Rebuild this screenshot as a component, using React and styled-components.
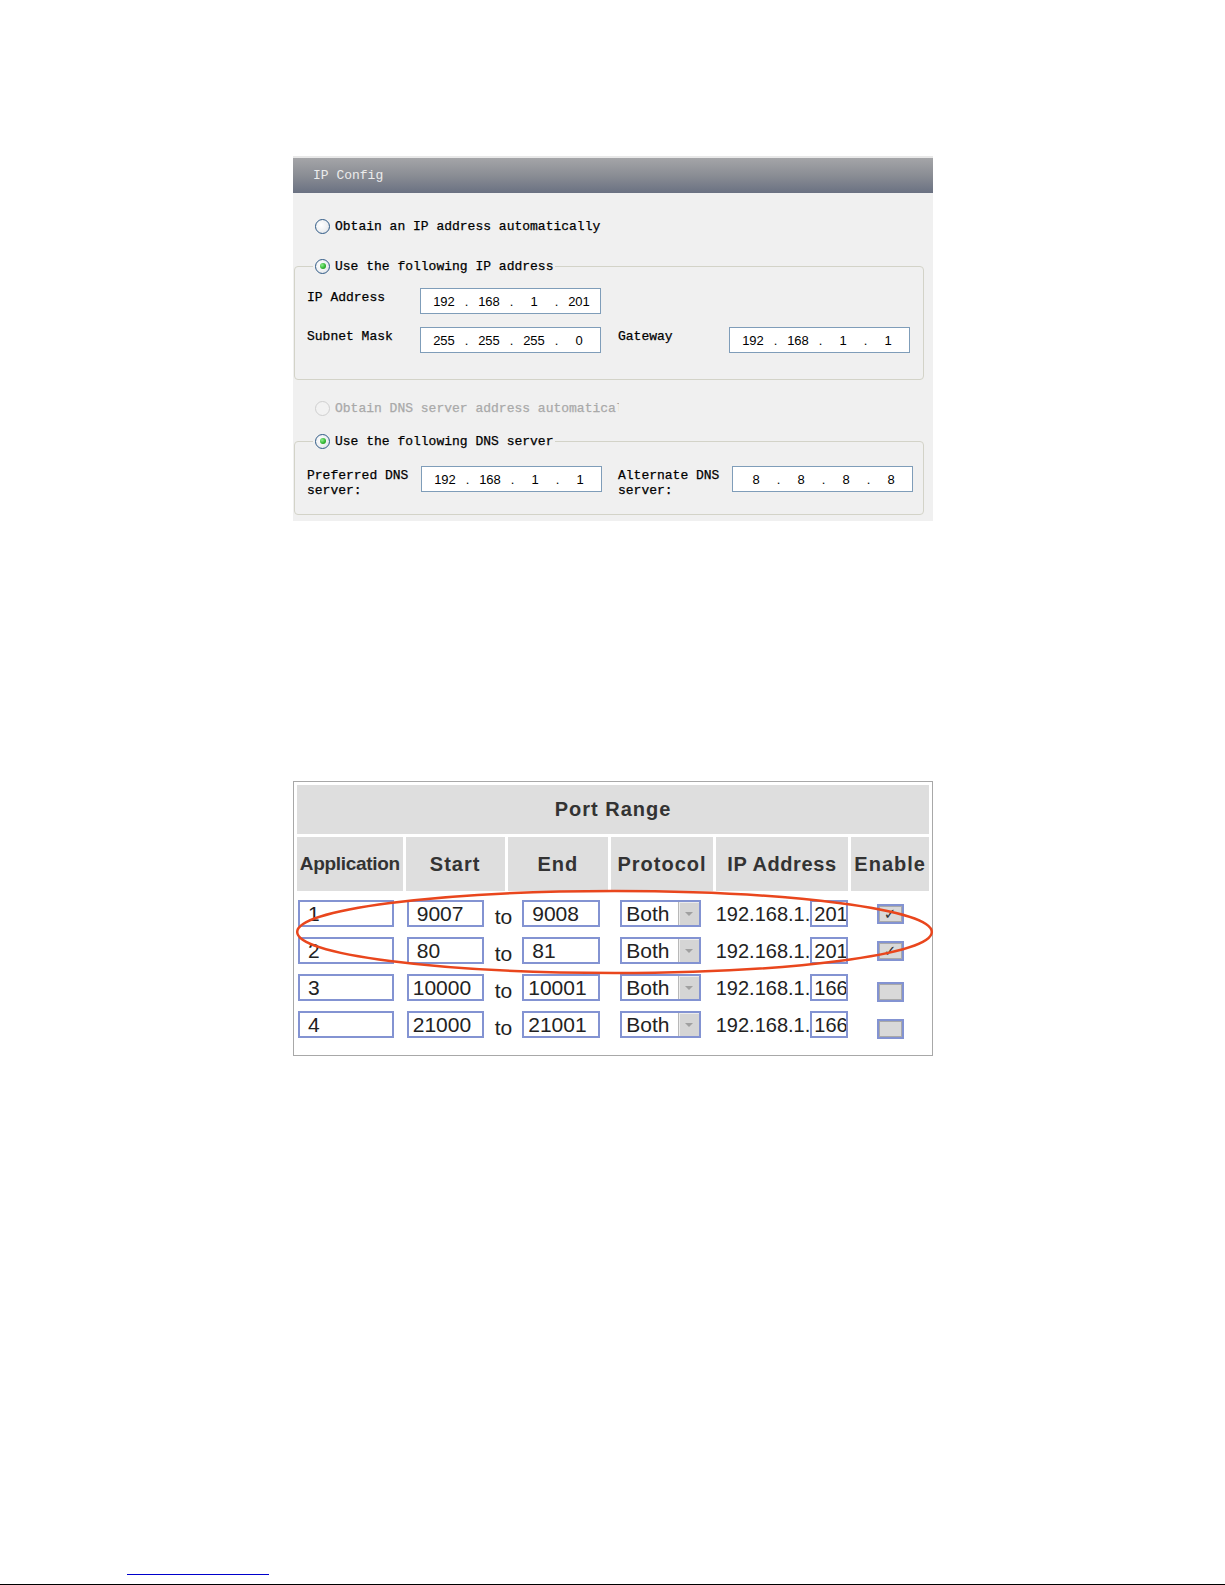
import React from 'react';
import styled, { createGlobalStyle } from 'styled-components';

const Global = createGlobalStyle`
  html, body { margin: 0; padding: 0; background: #ffffff; }
`;

const Page = styled.div`
  min-height: 1585px;
  display: flex;
  flex-direction: column;
  box-sizing: border-box;
  padding-top: 156px;
`;

/* ---------- IP Config panel ---------- */
const Panel = styled.section`
  margin-left: 293px;
  width: 640px;
  box-sizing: border-box;
  background: #f0f0f0;
  border-top: 2px solid #e8e8e8;
  padding-bottom: 6px;
  font-family: "Liberation Mono", "DejaVu Sans Mono", monospace;
  font-size: 13px;
  color: #000;
  -webkit-text-stroke: 0.25px currentColor;
`;

const PanelHeader = styled.div`
  height: 35px;
  display: flex;
  align-items: center;
  padding-left: 20px;
  background: linear-gradient(to bottom, #a4a5a8 0%, #8a8d94 50%, #6a7182 100%);
  color: #ececec;
  -webkit-text-stroke: 0;
`;

const PanelBody = styled.div`
  padding: 0 9px 0 1px;
`;

const RadioRow = styled.div`
  display: flex;
  align-items: center;
  height: 16px;
  margin-left: 21px;
  margin-top: ${p => p.$top}px;
  color: ${p => (p.$disabled ? '#a9a9a9' : '#000')};
`;

const RadioCircle = styled.span`
  width: 15px;
  height: 15px;
  box-sizing: border-box;
  border-radius: 50%;
  border: 1px solid ${p => (p.$disabled ? '#cfcfcf' : '#2f5a86')};
  background: ${p =>
    p.$disabled
      ? '#f2f2f2'
      : 'radial-gradient(circle at 40% 40%, #ffffff 0%, #eef0f2 55%, #cfd5dc 100%)'};
  margin-right: 5px;
  display: flex;
  align-items: center;
  justify-content: center;
  flex: none;
  -webkit-text-stroke: 0;
  &::after {
    content: '';
    display: ${p => (p.$checked ? 'block' : 'none')};
    width: 6px;
    height: 6px;
    border-radius: 50%;
    background: radial-gradient(circle at 35% 35%, #8ef08e 0%, #2fb22f 60%, #1c8a1c 100%);
  }
`;

const ClipText = styled.span`
  display: block;
  width: ${p => p.$width}px;
  overflow: hidden;
  white-space: nowrap;
`;

const Group = styled.fieldset`
  margin: ${p => p.$top}px 0 0 0;
  padding: ${p => p.$padTop}px 0 ${p => p.$padBottom}px 12px;
  border: 1px solid #d3d3c8;
  border-radius: 4px;
`;

const GroupLegend = styled.legend`
  margin-left: 6px;
  padding: 0 2px;
  height: 16px;
  display: flex;
  align-items: center;
`;

const FieldRow = styled.div`
  display: flex;
  align-items: flex-start;
  margin-top: ${p => p.$top || 0}px;
`;

const FieldLabel = styled.div`
  width: ${p => p.$width}px;
  margin-left: ${p => p.$left || 0}px;
  padding-top: 2px;
  line-height: 15px;
  flex: none;
`;

const IpBox = styled.div`
  width: 181px;
  height: 26px;
  box-sizing: border-box;
  border: 1px solid #7f9db9;
  background: #ffffff;
  display: flex;
  align-items: center;
  padding-left: 4px;
  font-family: "Liberation Sans", Arial, sans-serif;
  font-size: 13px;
  color: #000;
  -webkit-text-stroke: 0;
`;

const IpSeg = styled.span`
  width: 38px;
  text-align: center;
`;

const IpDot = styled.span`
  width: 7px;
  text-align: center;
`;

function IpField({ value }) {
  const parts = value.split('.');
  return (
    <IpBox>
      {parts.map((p, i) => (
        <React.Fragment key={i}>
          {i > 0 && <IpDot>.</IpDot>}
          <IpSeg>{p}</IpSeg>
        </React.Fragment>
      ))}
    </IpBox>
  );
}

/* ---------- Port range table ---------- */
const TableWrap = styled.div`
  position: relative;
  margin-left: 293px;
  margin-top: 260px;
  width: 640px;
  box-sizing: border-box;
  border: 1px solid #a8a8a8;
  padding-bottom: 13px;
  font-family: "Liberation Sans", Arial, sans-serif;
`;

const Table = styled.table`
  border-collapse: separate;
  border-spacing: 3px;
  table-layout: fixed;
`;

const HeadCell = styled.th`
  background: #dedede;
  color: #333;
  font-weight: bold;
  font-size: ${p => p.$size || 20}px;
  letter-spacing: ${p => p.$spacing ?? 1}px;
  height: ${p => p.$height}px;
  width: ${p => p.$width}px;
  padding: 0;
  text-align: center;
  vertical-align: middle;
  white-space: nowrap;
  overflow: hidden;
`;

const BodyCell = styled.td`
  padding: 6px 0 0 ${p => p.$padLeft || 0}px;
  height: 28px;
  vertical-align: top;
  line-height: 1;
`;

const CellFlex = styled.div`
  display: flex;
  align-items: center;
  height: 27px;
`;

const TextInput = styled.div`
  width: ${p => p.$width}px;
  height: 27px;
  box-sizing: border-box;
  border: 2px solid #8393d2;
  background: #fff;
  padding-left: ${p => p.$pad ?? 8}px;
  display: flex;
  align-items: center;
  font-size: ${p => p.$size || 21}px;
  color: #222;
  flex: none;
  overflow: hidden;
`;

const ToText = styled.span`
  font-size: 21px;
  color: #222;
  margin: 5px 10px 0 11px;
`;

const SelectBox = styled.div`
  width: 81px;
  height: 27px;
  box-sizing: border-box;
  border: 2px solid #8393d2;
  background: #fff;
  display: flex;
  margin-left: 9px;
`;

const SelectText = styled.span`
  flex: 1;
  padding-left: 4px;
  font-size: 21px;
  color: #222;
  display: flex;
  align-items: center;
`;

const SelectButton = styled.span`
  width: 20px;
  background: #d5d5d5;
  border-left: 1px solid #b8b8b8;
  box-shadow: inset 1px 1px 0 #ececec;
  display: flex;
  align-items: center;
  justify-content: center;
  &::after {
    content: '';
    width: 0;
    height: 0;
    border-left: 4px solid transparent;
    border-right: 4px solid transparent;
    border-top: 4px solid #a0a0a0;
  }
`;

const IpPrefix = styled.span`
  font-size: 20px;
  color: #222;
`;

const CheckBox = styled.span`
  display: flex;
  width: 27px;
  height: 20px;
  margin: ${p => p.$shift}px auto 0;
  box-sizing: border-box;
  border: 2px solid #8393d2;
  background: #d9d9d9;
  box-shadow: inset 0 0 0 1px #a9a9a9;
  align-items: center;
  justify-content: center;
  font-size: 15px;
  line-height: 1;
  color: #333;
  font-family: "DejaVu Sans", sans-serif;
`;

const Ellipse = styled.svg`
  position: absolute;
  left: 0;
  top: 0;
  width: 100%;
  height: 100%;
  overflow: visible;
  pointer-events: none;
`;

/* ---------- Footer ---------- */
const Footer = styled.footer`
  margin-top: auto;
  display: flex;
  flex-direction: column;
`;

const NoteRule = styled.div`
  margin-left: 127px;
  width: 142px;
  height: 1px;
  background: #0000cc;
`;

const BottomRule = styled.div`
  margin-top: 9px;
  height: 1px;
  background: #000;
`;

const rows = [
  { app: '1', start: '9007', end: '9008', host: '201', on: true },
  { app: '2', start: '80', end: '81', host: '201', on: true },
  { app: '3', start: '10000', end: '10001', host: '166', on: false },
  { app: '4', start: '21000', end: '21001', host: '166', on: false },
];

export default function App() {
  return (
    <Page>
      <Global />
      <Panel>
        <PanelHeader>IP Config</PanelHeader>
        <PanelBody>
          <RadioRow $top={25}>
            <RadioCircle />
            Obtain an IP address automatically
          </RadioRow>
          <Group $top={24} $padTop={14} $padBottom={26}>
            <GroupLegend>
              <RadioCircle $checked />
              Use the following IP address
            </GroupLegend>
            <FieldRow>
              <FieldLabel $width={113}>IP Address</FieldLabel>
              <IpField value="192.168.1.201" />
            </FieldRow>
            <FieldRow $top={13}>
              <FieldLabel $width={113}>Subnet Mask</FieldLabel>
              <IpField value="255.255.255.0" />
              <FieldLabel $width={111} $left={17}>Gateway</FieldLabel>
              <IpField value="192.168.1.1" />
            </FieldRow>
          </Group>
          <RadioRow $top={20} $disabled>
            <RadioCircle $disabled />
            <ClipText $width={284}>Obtain DNS server address automatically</ClipText>
          </RadioRow>
          <Group $top={17} $padTop={17} $padBottom={16}>
            <GroupLegend>
              <RadioCircle $checked />
              Use the following DNS server
            </GroupLegend>
            <FieldRow>
              <FieldLabel $width={114}>Preferred DNS<br />server:</FieldLabel>
              <IpField value="192.168.1.1" />
              <FieldLabel $width={114} $left={16}>Alternate DNS<br />server:</FieldLabel>
              <IpField value="8.8.8.8" />
            </FieldRow>
          </Group>
        </PanelBody>
      </Panel>

      <TableWrap>
        <Table>
          <thead>
            <tr>
              <HeadCell colSpan={6} $height={49}>Port Range</HeadCell>
            </tr>
            <tr>
              <HeadCell $height={54} $width={106} $size={19} $spacing={-0.3}>Application</HeadCell>
              <HeadCell $height={54} $width={99}>Start</HeadCell>
              <HeadCell $height={54} $width={101}>End</HeadCell>
              <HeadCell $height={54} $width={102}>Protocol</HeadCell>
              <HeadCell $height={54} $width={131} $spacing={0.6}>IP Address</HeadCell>
              <HeadCell $height={54} $width={78}>Enable</HeadCell>
            </tr>
          </thead>
          <tbody>
            {rows.map(r => (
              <tr key={r.app}>
                <BodyCell $padLeft={1}>
                  <TextInput $width={96}>{r.app}</TextInput>
                </BodyCell>
                <BodyCell colSpan={2} $padLeft={1}>
                  <CellFlex>
                    <TextInput $width={77} $pad={r.start.length > 4 ? 4 : 8}>{r.start}</TextInput>
                    <ToText>to</ToText>
                    <TextInput $width={78} $pad={r.end.length > 4 ? 4 : 8}>{r.end}</TextInput>
                  </CellFlex>
                </BodyCell>
                <BodyCell>
                  <SelectBox>
                    <SelectText>Both</SelectText>
                    <SelectButton />
                  </SelectBox>
                </BodyCell>
                <BodyCell>
                  <CellFlex>
                    <IpPrefix>192.168.1.</IpPrefix>
                    <TextInput $width={38} $pad={2} $size={20}>{r.host}</TextInput>
                  </CellFlex>
                </BodyCell>
                <BodyCell>
                  <CheckBox $shift={r.on ? 4 : 8}>{r.on ? '✓' : ''}</CheckBox>
                </BodyCell>
              </tr>
            ))}
          </tbody>
        </Table>
        <Ellipse>
          <ellipse cx="320.5" cy="150" rx="317.3" ry="41" fill="none" stroke="#e9461d" strokeWidth="2.5" />
        </Ellipse>
      </TableWrap>

      <Footer>
        <NoteRule />
        <BottomRule />
      </Footer>
    </Page>
  );
}
